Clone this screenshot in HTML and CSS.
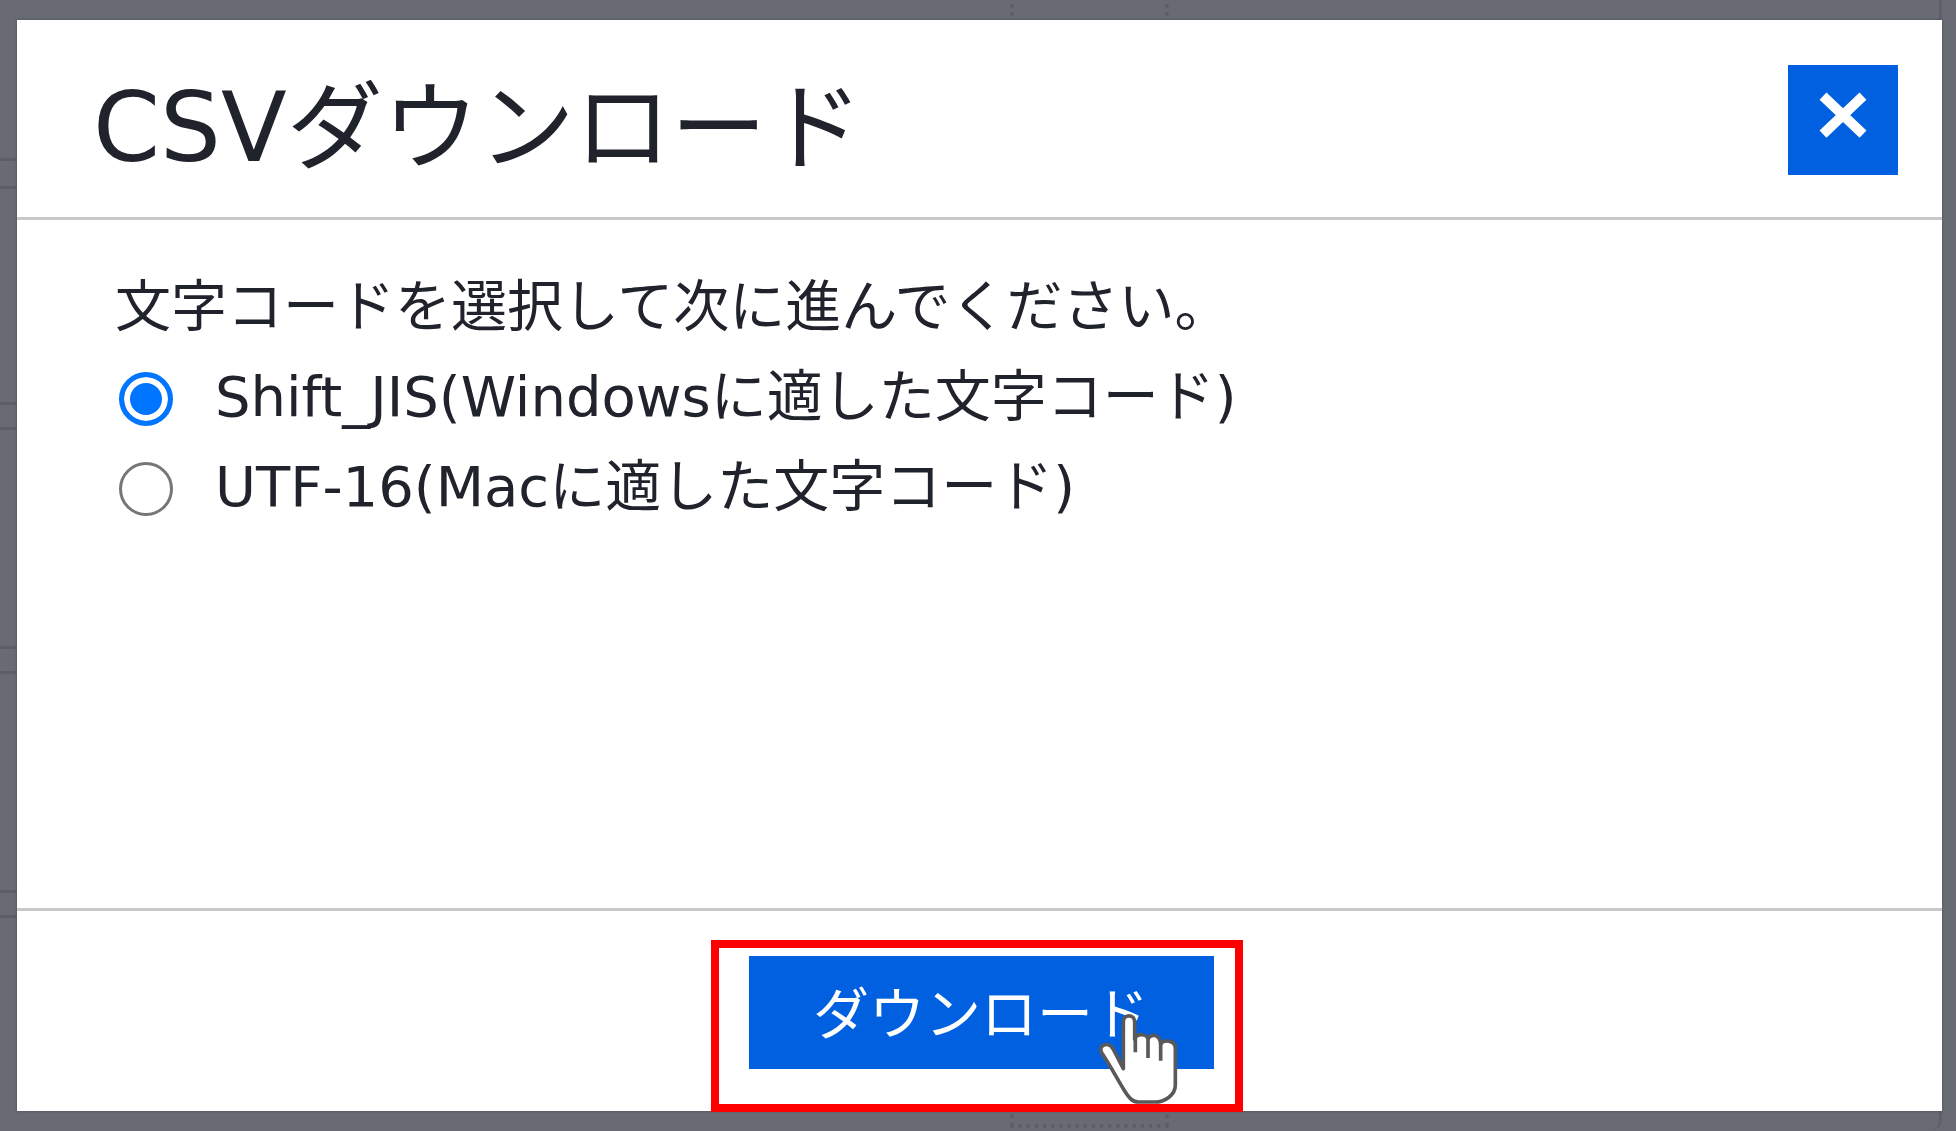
FILE: index.html
```html
<!DOCTYPE html>
<html lang="ja">
  <head>
    <meta charset="UTF-8" />
    <meta name="viewport" content="width=device-width, initial-scale=1.0" />
    <title>CSVダウンロード</title>
    <link rel="stylesheet" href="styles.css">
  </head>
  <body>
    <div class="page" aria-hidden="true">
      <div class="page-frame">
        <div class="page-row"></div>
        <div class="page-row"></div>
        <div class="page-row"></div>
        <div class="page-row"></div>
      </div>
      <div class="page-column"></div>
    </div>

    <div class="modal" role="dialog" aria-labelledby="modal-title">
      <div class="modal-header">
        <h1 id="modal-title">CSVダウンロード</h1>
        <button type="button" class="close" aria-label="閉じる">
          <svg viewBox="0 0 48 46" width="48" height="46">
            <path d="M4 4L44 42M44 4L4 42" stroke="#fff" stroke-width="10" />
          </svg>
        </button>
      </div>

      <form class="modal-body" id="csv-form">
        <p>文字コードを選択して次に進んでください。</p>
        <div class="option">
          <input type="radio" name="charset" id="sjis" value="sjis" checked />
          <label for="sjis">Shift_JIS(Windowsに適した文字コード)</label>
        </div>
        <div class="option">
          <input type="radio" name="charset" id="utf16" value="utf16" />
          <label for="utf16">UTF-16(Macに適した文字コード)</label>
        </div>
      </form>

      <div class="modal-footer">
        <div class="highlight">
          <button type="submit" form="csv-form" class="download">ダウンロード</button>
          <svg class="hand" viewBox="0 0 240 276" width="80" height="92">
            <path
              d="M73 170V29C73 6 107 6 107 29V82C112 63 145 64 147 82C153 64 183 65 185 97C192 81 229 84 229 108V220C229 250 196 270 168 270H119C101 270 91 259 77 237C56 204 37 165 8 122C-4 98 28 88 42 110Z"
              fill="#fff" stroke="#595959" stroke-width="11" stroke-linejoin="round" />
            <path d="M109 78V121M147 82V138M185 95V146" fill="none" stroke="#595959" stroke-width="11" />
          </svg>
        </div>
      </div>
    </div>
  </body>
</html>
```
FILE: styles.css
```css
* {
  box-sizing: border-box;
}
body {
  margin: 0;
  min-height: 100vh;
  padding: 20px 14px 20px 17px;
  display: flex;
  background: #696b74;
  color: #20222c;
  font-family: "DejaVu Sans", "Noto Sans CJK JP", sans-serif;
  font-size: 56px;
  line-height: 90px;
}
/* dimmed page behind the dialog */
.page {
  position: absolute;
  inset: 0;
  overflow: hidden;
}
.page-frame {
  height: 100%;
  margin-right: 14px;
  padding-top: 158px;
  border-right: 3px solid #5f6169;
  border-bottom-right-radius: 12px;
}
.page-row {
  height: 28px;
  margin-bottom: 216px;
  border-top: 3px solid #5c5e67;
  border-bottom: 3px solid #5c5e67;
}
.page-row:first-child {
  height: 31px;
  margin-bottom: 213px;
}
.page-column {
  position: absolute;
  top: -4px;
  bottom: 3px;
  left: 1010px;
  width: 159px;
  border: 4px dotted #5c5e67;
}
.modal {
  position: relative;
  flex: 1;
  display: flex;
  flex-direction: column;
  background: #fff;
  box-shadow: 0 0 3px #4c4c56;
}
.modal-header {
  display: flex;
  justify-content: space-between;
  align-items: flex-start;
  padding: 45px 44px 42px 76px;
  border-bottom: 3px solid #c8c8c8;
}
h1 {
  margin: 0;
  font-size: 96px;
  font-weight: 400;
  line-height: 110px;
  padding-top: 8px;
  margin-bottom: -8px;
}
.close {
  width: 110px;
  height: 110px;
  padding: 0 0 10px;
  display: flex;
  justify-content: center;
  align-items: center;
  background: #0060df;
  border: none;
  cursor: pointer;
}
.modal-body {
  flex: 1;
  padding: 42px 98px;
}
.modal-body p {
  margin: 0;
}
.option {
  display: flex;
  align-items: center;
  gap: 42px;
}
.option input {
  appearance: none;
  width: 54px;
  height: 54px;
  margin: 4px 0 0 4px;
  border: 3px solid #767676;
  border-radius: 50%;
}
.option input:checked {
  border: 5px solid #0075ff;
  background: #0075ff;
  box-shadow: inset 0 0 0 6px #fff;
}
.modal-footer {
  display: flex;
  justify-content: center;
  padding-top: 29px;
  border-top: 3px solid #c8c8c8;
}
.highlight {
  position: relative;
  margin-bottom: -1px;
  margin-right: 6px;
  padding: 8px 21px 35px 30px;
  border: 8px solid #f00;
}
.download {
  width: 465px;
  height: 113px;
  padding: 4px 0 0;
  background: #0060df;
  color: #fff;
  border: none;
  font: inherit;
  cursor: pointer;
}
.hand {
  position: absolute;
  right: 56px;
  bottom: 0;
}
```
